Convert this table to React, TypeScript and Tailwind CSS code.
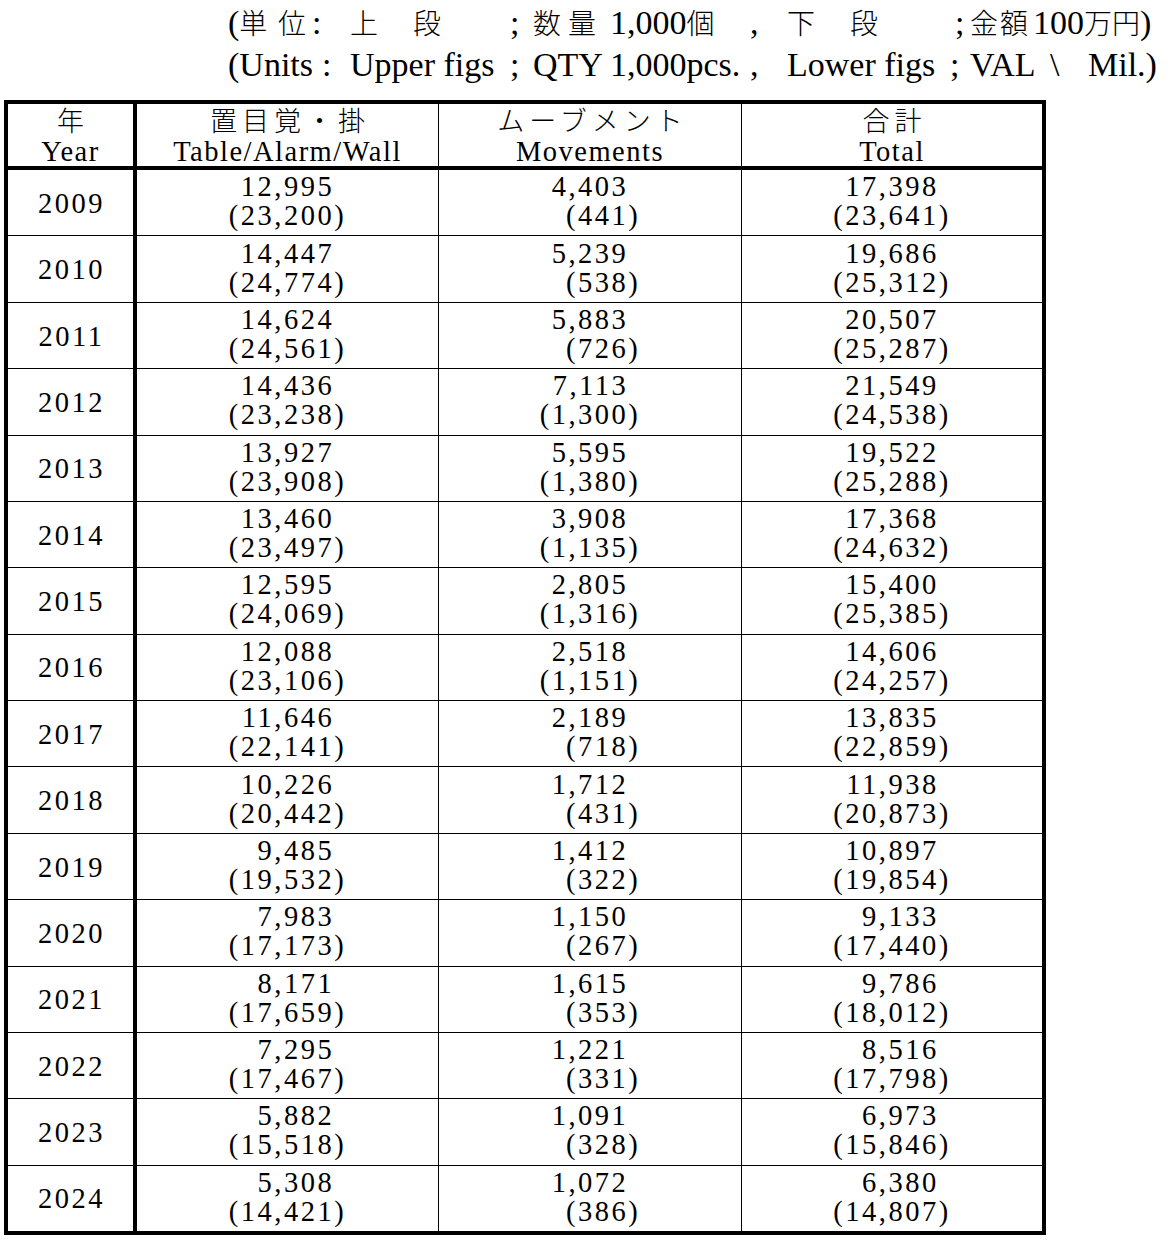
import React from "react";

type Row = [string, string, string, string, string, string, string];

const rows: Row[] = [
  ["2009", "12,995", "(23,200)", "4,403", "(441)", "17,398", "(23,641)"],
  ["2010", "14,447", "(24,774)", "5,239", "(538)", "19,686", "(25,312)"],
  ["2011", "14,624", "(24,561)", "5,883", "(726)", "20,507", "(25,287)"],
  ["2012", "14,436", "(23,238)", "7,113", "(1,300)", "21,549", "(24,538)"],
  ["2013", "13,927", "(23,908)", "5,595", "(1,380)", "19,522", "(25,288)"],
  ["2014", "13,460", "(23,497)", "3,908", "(1,135)", "17,368", "(24,632)"],
  ["2015", "12,595", "(24,069)", "2,805", "(1,316)", "15,400", "(25,385)"],
  ["2016", "12,088", "(23,106)", "2,518", "(1,151)", "14,606", "(24,257)"],
  ["2017", "11,646", "(22,141)", "2,189", "(718)", "13,835", "(22,859)"],
  ["2018", "10,226", "(20,442)", "1,712", "(431)", "11,938", "(20,873)"],
  ["2019", "9,485", "(19,532)", "1,412", "(322)", "10,897", "(19,854)"],
  ["2020", "7,983", "(17,173)", "1,150", "(267)", "9,133", "(17,440)"],
  ["2021", "8,171", "(17,659)", "1,615", "(353)", "9,786", "(18,012)"],
  ["2022", "7,295", "(17,467)", "1,221", "(331)", "8,516", "(17,798)"],
  ["2023", "5,882", "(15,518)", "1,091", "(328)", "6,973", "(15,846)"],
  ["2024", "5,308", "(14,421)", "1,072", "(386)", "6,380", "(14,807)"],
];

function L({ children }: { children: React.ReactNode }) {
  return <span className="font-['Liberation_Serif',serif] text-[34px]">{children}</span>;
}
function J({ children }: { children: React.ReactNode }) {
  return <span className="font-['Noto_Sans_CJK_JP',sans-serif] text-[28px] font-light">{children}</span>;
}

function Val({ top, bottom, sizer }: { top: string; bottom: string; sizer: string }) {
  return (
    <div className="flex h-full items-center justify-center pb-[3px]">
      <div className="grid whitespace-nowrap text-right leading-[29px] tracking-[2.5px]">
        <div className="invisible col-start-1 row-start-1 h-0 overflow-hidden">{sizer}</div>
        <div className="col-start-1 row-start-1">
          {top}
          <span className="invisible">)</span>
        </div>
        <div className="col-start-1 row-start-2">{bottom}</div>
      </div>
    </div>
  );
}

function HeadCell({ jp, en }: { jp: string; en: string }) {
  return (
    <div className="flex h-full flex-col items-center justify-center pt-[2px]">
      <div className="h-[31px] pl-[5px] font-['Noto_Sans_CJK_JP',sans-serif] text-[27px] leading-[28px] font-light tracking-[5px]">{jp}</div>
      <div className="h-[29px] leading-[29px] tracking-[1.5px]">{en}</div>
    </div>
  );
}

export default function App() {
  return (
    <div className="h-[1240px] w-[1168px] bg-white text-black">
      <div className="h-[100px] pt-[5px]">
        <div className="flex h-[40px] items-center whitespace-nowrap pl-[228px] leading-[40px]">
          <span className="inline-block w-[50px]"><L>(</L><J>単</J></span>
          <span className="inline-block w-[34px]"><J>位</J></span>
          <span className="inline-block w-[38px]"><L>:</L></span>
          <span className="inline-block w-[63px]"><J>上</J></span>
          <span className="inline-block w-[97px]"><J>段</J></span>
          <span className="inline-block w-[23px]"><L>;</L></span>
          <span className="inline-block w-[35px]"><J>数</J></span>
          <span className="inline-block w-[42px]"><J>量</J></span>
          <span className="inline-block w-[140px]"><L>1,000</L><J>個</J></span>
          <span className="inline-block w-[37px]"><L>,</L></span>
          <span className="inline-block w-[63px]"><J>下</J></span>
          <span className="inline-block w-[105px]"><J>段</J></span>
          <span className="inline-block w-[15px]"><L>;</L></span>
          <span className="inline-block w-[30px]"><J>金</J></span>
          <span className="inline-block w-[33px]"><J>額</J></span>
          <span className="inline-block"><L>100</L><J>万円</J><L>)</L></span>
        </div>
        <div className="flex h-[40px] items-center whitespace-nowrap pl-[228px] font-['Liberation_Serif',serif] text-[34px] leading-[40px]">
          <span className="inline-block w-[94px]">(Units</span>
          <span className="inline-block w-[28px]">:</span>
          <span className="inline-block w-[160px]">Upper figs</span>
          <span className="inline-block w-[23px]">;</span>
          <span className="inline-block w-[77px]">QTY</span>
          <span className="inline-block w-[140px]">1,000pcs.</span>
          <span className="inline-block w-[37px]">,</span>
          <span className="inline-block w-[163px]">Lower figs</span>
          <span className="inline-block w-[20px]">;</span>
          <span className="inline-block w-[80px]">VAL</span>
          <span className="inline-block w-[38px]">{"\\"}</span>
          <span className="inline-block">Mil.)</span>
        </div>
      </div>

      <div className="ml-[4px] w-[1042px] border-4 border-black font-['Liberation_Serif',serif] text-[28.5px]">
        <div className="flex h-[66px] border-b-4 border-black">
          <div className="w-[129px] border-r-4 border-black">
            <HeadCell jp="年" en="Year" />
          </div>
          <div className="w-[302px] border-r border-black">
            <HeadCell jp="置目覚・掛" en="Table/Alarm/Wall" />
          </div>
          <div className="w-[303px] border-r border-black">
            <HeadCell jp="ムーブメント" en="Movements" />
          </div>
          <div className="flex-1">
            <HeadCell jp="合計" en="Total" />
          </div>
        </div>
        <div className="flex h-[1061px] flex-col">
          {rows.map((r, i) => (
            <div key={r[0]} className={`flex min-h-0 flex-1 ${i > 0 ? "border-t border-black" : ""}`}>
              <div className="flex w-[129px] items-center justify-center border-r-4 border-black pl-[2px] pt-[3px] tracking-[2.5px]">{r[0]}</div>
              <div className="w-[302px] border-r border-black">
                <Val top={r[1]} bottom={r[2]} sizer="(00,000)" />
              </div>
              <div className="w-[303px] border-r border-black">
                <Val top={r[3]} bottom={r[4]} sizer="(0,000)" />
              </div>
              <div className="flex-1">
                <Val top={r[5]} bottom={r[6]} sizer="(00,000)" />
              </div>
            </div>
          ))}
        </div>
      </div>
    </div>
  );
}
